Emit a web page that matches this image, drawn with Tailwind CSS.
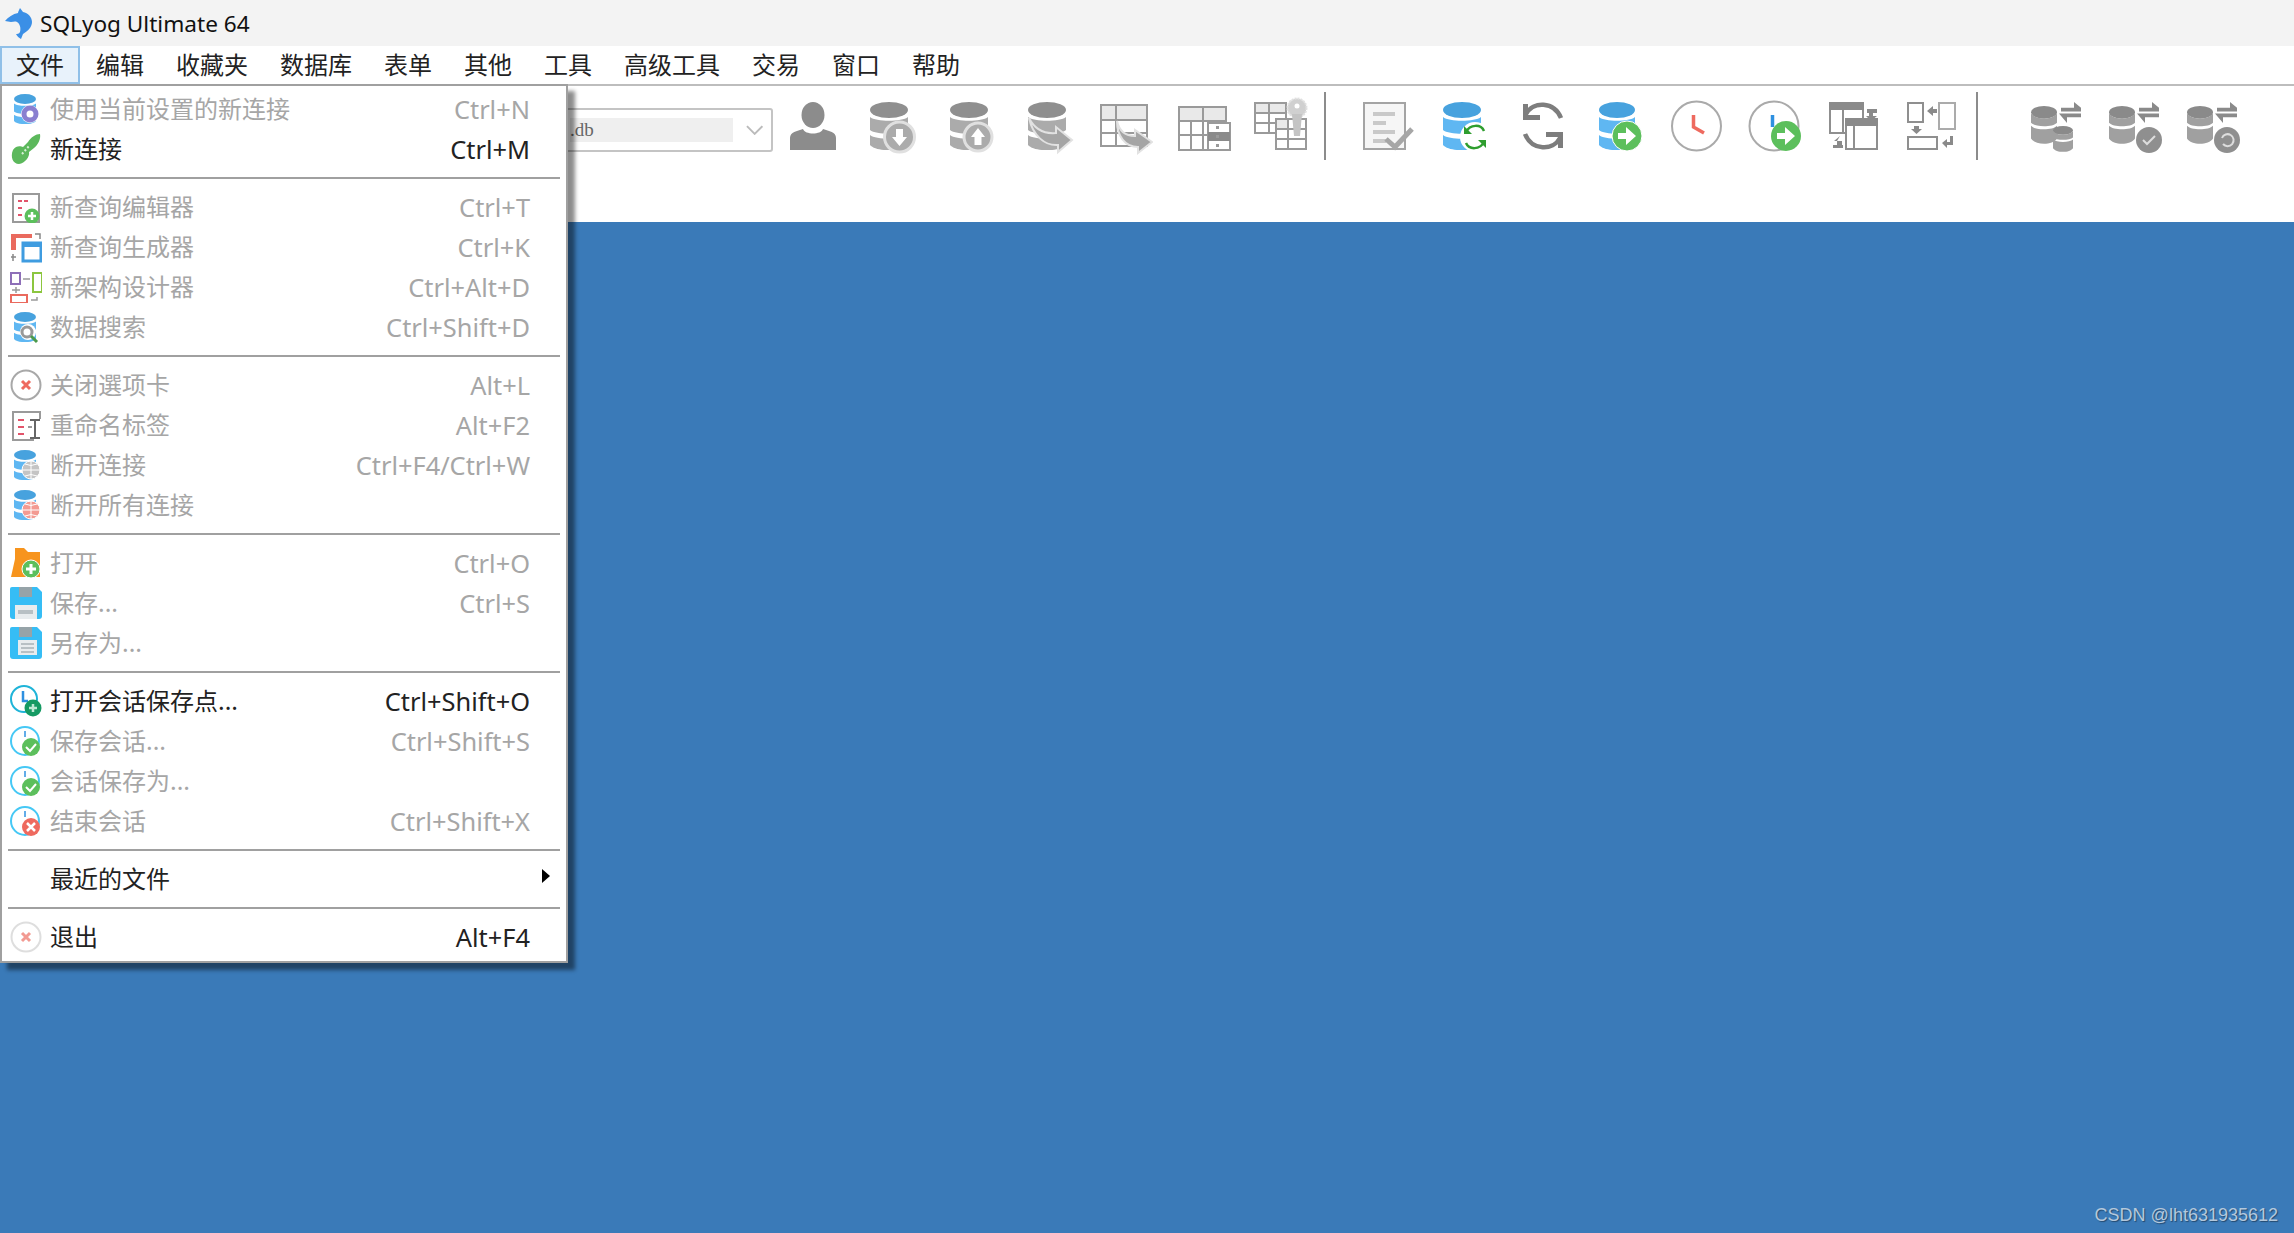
<!DOCTYPE html>
<html lang="zh-CN">
<head>
<meta charset="UTF-8">
<title>SQLyog Ultimate 64</title>
<script src="https://cdn.jsdelivr.net/npm/@tailwindcss/browser@4"></script>
</head>
<body class="font-['Noto_Sans_CJK_SC',sans-serif] bg-[#3a7ab8] overflow-hidden">
<svg class="hidden">
  <symbol id="dbgray" viewBox="0 0 38 48" preserveAspectRatio="none">
    <ellipse cx="19" cy="8" rx="19" ry="8" fill="#8f8f8f"/>
    <path d="M0 15C6 20 32 20 38 15V28C32 33 6 33 0 28Z" fill="#ababab"/>
    <path d="M0 33C6 38 32 38 38 33V43C32 50 6 50 0 43Z" fill="#ababab"/>
  </symbol>
  <symbol id="dbblue" viewBox="0 0 38 48" preserveAspectRatio="none">
    <ellipse cx="19" cy="8" rx="19" ry="8" fill="#47a2de"/>
    <path d="M0 15C6 20 32 20 38 15V28C32 33 6 33 0 28Z" fill="#5fb7f2"/>
    <path d="M0 33C6 38 32 38 38 33V43C32 50 6 50 0 43Z" fill="#5fb7f2"/>
  </symbol>
  <symbol id="dbdark" viewBox="0 0 38 48" preserveAspectRatio="none">
    <ellipse cx="19" cy="8" rx="19" ry="8" fill="#8a8a8a"/>
    <path d="M0 9C6 18 32 18 38 9V21C32 27 6 27 0 21Z" fill="#a0a0a0"/>
    <path d="M0 25C6 31 32 31 38 25V41C32 50 6 50 0 41Z" fill="#a0a0a0"/>
  </symbol>
  <symbol id="floppy" viewBox="0 0 32 32">
    <path d="M2 0H27L32 5V29Q32 32 29 32H3Q0 32 0 29V2Q0 0 2 0Z" fill="#36bdf5"/>
    <rect x="9" y="0" width="13" height="10" fill="#96a3a8"/>
  </symbol>
  <symbol id="xferarrows" viewBox="0 0 24 24" preserveAspectRatio="none">
    <path d="M3 7H16V1L23 7V11H3Z" fill="#8a8a8a"/>
    <path d="M23 13V17H9V23L1 13Z" fill="#8a8a8a"/>
  </symbol>
</svg>

<div class="h-screen flex flex-col relative">
  <!-- title bar -->
  <div class="h-[46px] bg-[#f3f3f3] flex items-center pl-[5px] gap-[8px] pt-[1px]">
    <svg class="w-[27px] h-[31px]" viewBox="0 0 27 31">
      <path d="M15 0C14 2 13 4 13 5C8 6 3 9 0 13C2 13 4 14 6 14C8 14 10 13 12 14C15 16 16 20 15 24C14 26 12 26 11 26C12 28 14 30 16 31L18 26C23 23 27 19 27 14C27 9 23 5 18 4Z" fill="#3b8fe6"/>
    </svg>
    <span class="font-['Noto_Sans'] text-[22.6px] text-[#111]">SQLyog Ultimate 64</span>
  </div>

  <!-- menu bar -->
  <div class="h-[38px] bg-white flex text-[24px] leading-[36px] text-[#222]">
    <span class="px-[16px] ">文件</span>
    <span class="px-[16px]">编辑</span>
    <span class="px-[16px]">收藏夹</span>
    <span class="px-[16px]">数据库</span>
    <span class="px-[16px]">表单</span>
    <span class="px-[16px]">其他</span>
    <span class="px-[16px]">工具</span>
    <span class="px-[16px]">高级工具</span>
    <span class="px-[16px]">交易</span>
    <span class="px-[16px]">窗口</span>
    <span class="px-[16px]">帮助</span>
  </div>

  <!-- toolbar -->
  <div class="h-[138px] bg-white border-t-2 border-[#bdbdbd] flex items-start pl-[440px]">
    <div class="w-[333px] h-[44px] mt-[22px] border-2 border-[#c4c4c4] rounded-[3px] flex items-center pl-[128px] pr-[8px]">
      <div class="w-[169px] h-[24px] bg-[#efefef] font-['Liberation_Serif'] text-[#666] text-[19px] leading-[24px]">.db</div>
      <svg class="ml-[13px] w-[18px] h-[10px]" viewBox="0 0 18 10"><path d="M1 1L9 9L17 1" fill="none" stroke="#bbb" stroke-width="2"/></svg>
    </div>

    <div class="flex ml-[1px]">
      <div class="w-[78px] mt-[10px] flex justify-center">
        <svg class="w-[56px] h-[60px]" viewBox="0 0 56 60" fill="#8c8c8c">
          <ellipse cx="28" cy="19" rx="11.500" ry="13"/>
          <path d="M5 54V42C5 36 12 35 18 33C20 39 36 39 38 33C44 35 51 36 51 42V54Z"/>
        </svg>
      </div>
      <div class="w-[78px] mt-[10px] flex justify-center">
        <svg class="w-[56px] h-[60px]" viewBox="0 0 56 60">
          <use href="#dbgray" x="7" y="6" width="38" height="48"/>
          <circle cx="36.500" cy="41" r="15" fill="#ababab" stroke="#e0e0e0" stroke-width="3"/>
          <path d="M33 33H40V41H44L36.500 50L29 41H33Z" fill="#fff"/>
        </svg>
      </div>
      <div class="w-[78px] mt-[10px] flex justify-center">
        <svg class="w-[56px] h-[60px]" viewBox="0 0 56 60">
          <use href="#dbgray" x="9" y="6" width="38" height="48"/>
          <circle cx="37" cy="41" r="14" fill="#ababab" stroke="#e0e0e0" stroke-width="3"/>
          <path d="M33.500 49H40.500V41H44L37 32L30 41H33.500Z" fill="#fff"/>
        </svg>
      </div>
      <div class="w-[78px] mt-[10px] flex justify-center">
        <svg class="w-[56px] h-[60px]" viewBox="0 0 56 60">
          <use href="#dbgray" x="9" y="6" width="38" height="48"/>
          <path d="M10 22C16 34 26 38 37 37V31L53 44L39 56V49C26 50 14 40 10 22Z" fill="#a5a5a5" stroke="#e2e2e2" stroke-width="2"/>
        </svg>
      </div>
      <div class="w-[78px] mt-[10px] flex justify-center">
        <svg class="w-[56px] h-[60px]" viewBox="0 0 56 60">
          <rect x="4" y="9" width="46" height="41" fill="#fff" stroke="#9a9a9a" stroke-width="2"/>
          <rect x="5" y="10" width="44" height="14" fill="#e9e9e9"/>
          <path d="M4 24H50M4 37H50M19 9V50" stroke="#9a9a9a" stroke-width="2"/>
          <path d="M20 25C22 34 28 40 38 40V34L55 46L41 57V51C28 51 20 40 20 25Z" fill="#a5a5a5" stroke="#e2e2e2" stroke-width="2"/>
        </svg>
      </div>
      <div class="w-[78px] mt-[10px] flex justify-center">
        <svg class="w-[56px] h-[60px]" viewBox="0 0 56 60">
          <rect x="4" y="11" width="47" height="43" fill="#fff" stroke="#9a9a9a" stroke-width="2"/>
          <rect x="5" y="12" width="45" height="13" fill="#e9e9e9"/>
          <path d="M4 25H51M4 39H51M16 25V54M28 11V54" stroke="#9a9a9a" stroke-width="2"/>
          <rect x="33" y="27" width="22" height="27" fill="#fff" stroke="#9a9a9a" stroke-width="2"/>
          <rect x="33" y="36" width="22" height="9" fill="#8a8a8a"/>
          <path d="M41 30h3v3h-3zM41 39h3v3h-3zM41 48h3v3h-3z" fill="#9a9a9a"/>
        </svg>
      </div>
      <div class="w-[78px] mt-[10px] flex justify-center">
        <svg class="w-[56px] h-[60px]" viewBox="0 0 56 60">
          <rect x="2" y="7" width="31" height="30" fill="#fff" stroke="#9a9a9a" stroke-width="2"/>
          <rect x="3" y="8" width="29" height="9" fill="#e9e9e9"/>
          <path d="M2 17H33M2 27H33M16 7V37" stroke="#9a9a9a" stroke-width="2"/>
          <rect x="23" y="23" width="30" height="30" fill="#fff" stroke="#9a9a9a" stroke-width="2"/>
          <rect x="24" y="24" width="11" height="9" fill="#e9e9e9"/>
          <path d="M23 33H53M23 43H53M35 23V53" stroke="#9a9a9a" stroke-width="2"/>
          <circle cx="44" cy="12" r="9.500" fill="#d0d0d0" stroke="#e0e0e0" stroke-width="2" stroke-dasharray="2 1"/>
          <circle cx="44" cy="10" r="2.500" fill="#fff"/>
          <path d="M39 18H49L47 40H41Z" fill="#c4c4c4"/>
        </svg>
      </div>
    </div>

    <div class="w-[2px] h-[68px] mt-[6px] ml-[4px] mr-[23px] bg-[#8c8c8c]"></div>

    <div class="flex">
      <div class="w-[77.6px] mt-[10px] flex justify-center">
        <svg class="w-[56px] h-[60px]" viewBox="0 0 56 60">
          <rect x="4" y="7" width="41" height="46" fill="#f6f6f6" stroke="#a4a4a4" stroke-width="2"/>
          <path d="M13 18H35M13 27H26M13 36H35M13 45H26" stroke="#c9c9c9" stroke-width="4"/>
          <path d="M26 43L35 51L52 33" fill="none" stroke="#a6a6a6" stroke-width="5"/>
        </svg>
      </div>
      <div class="w-[77.6px] mt-[10px] flex justify-center">
        <svg class="w-[56px] h-[60px]" viewBox="0 0 56 60">
          <use href="#dbblue" x="6" y="6" width="38" height="48"/>
          <circle cx="38" cy="41" r="15" fill="#fff"/>
          <path d="M29 36C33 28 44 28 47 35M47 46C43 54 32 54 29 47" fill="none" stroke="#2f9e2f" stroke-width="2.500"/>
          <path d="M27 30V38H35ZM49 52V44H41Z" fill="#2f9e2f"/>
        </svg>
      </div>
      <div class="w-[77.6px] mt-[10px] flex justify-center">
        <svg class="w-[56px] h-[60px]" viewBox="0 0 56 60">
          <path d="M11 18C18 5 39 5 46 22M45 42C38 55 17 55 10 38" fill="none" stroke="#7d7d7d" stroke-width="4.500"/>
          <path d="M8 8V24H25V19H13V8ZM48 52V36H31V41H43V52Z" fill="#7d7d7d"/>
        </svg>
      </div>
      <div class="w-[77.6px] mt-[10px] flex justify-center">
        <svg class="w-[56px] h-[60px]" viewBox="0 0 56 60">
          <use href="#dbblue" x="6" y="6" width="36" height="48"/>
          <circle cx="34" cy="40" r="15" fill="#5cbf5c" stroke="#fff" stroke-width="1"/>
          <path d="M25 37H33V31L43 40L33 49V43H25Z" fill="#fff"/>
        </svg>
      </div>
      <div class="w-[77.6px] mt-[10px] flex justify-center">
        <svg class="w-[56px] h-[60px]" viewBox="0 0 56 60">
          <circle cx="26.500" cy="30" r="24.500" fill="#fff" stroke="#aaa" stroke-width="2"/>
          <path d="M23.500 19V31L34 37" fill="none" stroke="#ee6a5f" stroke-width="3.500"/>
        </svg>
      </div>
      <div class="w-[77.6px] mt-[10px] flex justify-center">
        <svg class="w-[56px] h-[60px]" viewBox="0 0 56 60">
          <circle cx="26" cy="30" r="24.500" fill="#fff" stroke="#aaa" stroke-width="2"/>
          <path d="M24.500 19V31" stroke="#2e90e0" stroke-width="3.500"/>
          <circle cx="38" cy="40" r="15" fill="#5cbf5c"/>
          <path d="M29 37H37V31L47 40L37 49V43H29Z" fill="#fff"/>
        </svg>
      </div>
      <div class="w-[77.6px] mt-[10px] flex justify-center">
        <svg class="w-[56px] h-[60px]" viewBox="0 0 56 60">
          <rect x="5" y="7" width="33" height="30" fill="#fff" stroke="#8f8f8f" stroke-width="2"/>
          <rect x="4" y="6" width="35" height="8" fill="#8a8a8a"/>
          <path d="M18 14V37" stroke="#8f8f8f" stroke-width="2"/>
          <rect x="21" y="23" width="31" height="30" fill="#fff" stroke="#8f8f8f" stroke-width="2"/>
          <rect x="20" y="22" width="33" height="8" fill="#8a8a8a"/>
          <path d="M29 30V53" stroke="#8f8f8f" stroke-width="2"/>
          <path d="M42 13H52V17H48V20H52L46 25L41 20H44V17H42ZM15 40L9 45H12V49H17V45H12ZM8 49H18V52H8Z" fill="#8a8a8a"/>
        </svg>
      </div>
      <div class="w-[77.6px] mt-[10px] flex justify-center">
        <svg class="w-[56px] h-[60px]" viewBox="0 0 56 60">
          <rect x="5" y="7" width="15" height="19" fill="#fff" stroke="#8f8f8f" stroke-width="2"/>
          <rect x="36" y="7" width="16" height="26" fill="#fff" stroke="#ababab" stroke-width="2"/>
          <rect x="5" y="41" width="29" height="12" fill="#fff" stroke="#8f8f8f" stroke-width="2"/>
          <path d="M24 15L30 10V13H34V17H30V20ZM11 30H16V33H19L13.500 38L8 33H11ZM39 47L44 43V46H47V40H50V49H44V52Z" fill="#8a8a8a"/>
        </svg>
      </div>
    </div>

    <div class="w-[2px] h-[68px] mt-[6px] ml-[6px] mr-[39px] bg-[#8c8c8c]"></div>

    <div class="flex">
      <div class="w-[78px] mt-[10px] flex justify-center">
        <svg class="w-[56px] h-[60px]" viewBox="0 0 56 60">
          <use href="#dbdark" x="3" y="10" width="26" height="38"/>
          <use href="#dbdark" x="25" y="30" width="20" height="26"/>
          <use href="#xferarrows" x="30" y="5" width="24" height="23"/>
        </svg>
      </div>
      <div class="w-[78px] mt-[10px] flex justify-center">
        <svg class="w-[56px] h-[60px]" viewBox="0 0 56 60">
          <use href="#dbdark" x="3" y="10" width="26" height="38"/>
          <use href="#xferarrows" x="30" y="5" width="24" height="23"/>
          <circle cx="43" cy="44" r="13" fill="#8f8f8f"/>
          <path d="M37 44L41 48L49 40" fill="none" stroke="#ddd" stroke-width="2"/>
        </svg>
      </div>
      <div class="w-[78px] mt-[10px] flex justify-center">
        <svg class="w-[56px] h-[60px]" viewBox="0 0 56 60">
          <use href="#dbdark" x="3" y="10" width="26" height="38"/>
          <use href="#xferarrows" x="30" y="5" width="24" height="23"/>
          <circle cx="43" cy="44" r="13" fill="#8f8f8f"/>
          <path d="M38 42A6 6 0 1 1 39 48" fill="none" stroke="#ddd" stroke-width="2"/>
        </svg>
      </div>
    </div>
  </div>

  <!-- workspace -->
  <div class="flex-1 bg-[#3a7ab8] flex items-end justify-end pr-[16px] pb-[4px]">
    <span class="font-['Liberation_Sans'] text-[18px] text-[#b4c8dc] [text-shadow:1px_1px_1px_rgba(0,0,0,0.4)]">CSDN @lht631935612</span>
  </div>

  <!-- active menu item -->
  <div class="absolute left-0 top-[46px] w-[80px] h-[38px] bg-[#e8f2fb] border-2 border-[#90c0e8] text-[24px] leading-[32px] pl-[14px] text-[#222]">文件</div>

  <!-- open menu -->
  <div class="absolute left-0 top-[84px] w-[568px] bg-white border-2 border-[#a0a0a0] pt-[3px] pb-[4px] text-[24px] text-[#a6a6a6] shadow-[7px_7px_4px_rgba(0,0,0,0.45)]">
    <div class="h-[40px] flex items-center pl-[8px] pr-[36px]">
      <svg class="w-[32px] h-[32px] mr-[8px] overflow-visible" viewBox="0 0 32 32">
        <use href="#dbblue" x="4" y="1" width="22" height="30"/>
        <circle cx="20" cy="21" r="9" fill="#fff"/>
        <circle cx="20" cy="21" r="6" fill="none" stroke="#8a7fd0" stroke-width="5"/>
      </svg>
      <span class="flex-1 mb-[2px]">使用当前设置的新连接</span><span class="font-['Noto_Sans'] text-[25.4px]">Ctrl+N</span>
    </div>
    <div class="h-[40px] flex items-center pl-[8px] pr-[36px] text-[#222]">
      <svg class="w-[32px] h-[32px] mr-[8px]" viewBox="0 0 32 32">
        <path d="M3 17C6 12 11 13 13 14L18 9C21 4 26 1 30 1C31 6 28 12 24 15L19 19C20 24 15 30 9 31C3 31 0 24 3 17Z" fill="#5cb85c"/>
        <path d="M12 21L20 12" stroke="#d8f0d8" stroke-width="2" stroke-dasharray="2 2"/>
      </svg>
      <span class="flex-1 mb-[2px]">新连接</span><span class="font-['Noto_Sans'] text-[25.4px]">Ctrl+M</span>
    </div>
    <div class="h-[18px] py-[8px] px-[6px]"><div class="h-[2px] bg-[#a0a0a0]"></div></div>

    <div class="h-[40px] flex items-center pl-[8px] pr-[36px]">
      <svg class="w-[32px] h-[32px] mr-[8px]" viewBox="0 0 32 32">
        <rect x="3" y="3" width="26" height="28" fill="#fff" stroke="#9a9a9a" stroke-width="2"/>
        <path d="M8 10H18M8 17H14M8 24H14" stroke="#e2536a" stroke-width="2" stroke-dasharray="4 2"/>
        <circle cx="22" cy="25" r="7.500" fill="#5cbf5c"/>
        <path d="M18 25H26M22 21V29" stroke="#fff" stroke-width="2.500"/>
      </svg>
      <span class="flex-1 mb-[2px]">新查询编辑器</span><span class="font-['Noto_Sans'] text-[25.4px]">Ctrl+T</span>
    </div>
    <div class="h-[40px] flex items-center pl-[8px] pr-[36px]">
      <svg class="w-[32px] h-[32px] mr-[8px]" viewBox="0 0 32 32">
        <path d="M1 3H22V7H6V19H1Z" fill="#ea6a5e"/>
        <rect x="13" y="12" width="18" height="18" fill="#fff" stroke="#3f9ce0" stroke-width="3"/>
        <rect x="12" y="11" width="20" height="5" fill="#3f9ce0"/>
        <path d="M25 3H30V8M3 30V23M1 26H6" fill="none" stroke="#888" stroke-width="1.500"/>
      </svg>
      <span class="flex-1 mb-[2px]">新查询生成器</span><span class="font-['Noto_Sans'] text-[25.4px]">Ctrl+K</span>
    </div>
    <div class="h-[40px] flex items-center pl-[8px] pr-[36px]">
      <svg class="w-[32px] h-[32px] mr-[8px]" viewBox="0 0 32 32">
        <rect x="1" y="2" width="9" height="11" fill="#fff" stroke="#8e6fb8" stroke-width="2"/>
        <rect x="23" y="2" width="9" height="19" fill="#fff" stroke="#8cc63f" stroke-width="2"/>
        <rect x="1" y="24" width="16" height="8" fill="#fff" stroke="#ea6a5e" stroke-width="2"/>
        <path d="M13 8H20M6 16V22M2 19H10M27 26V29H21" fill="none" stroke="#999" stroke-width="1.500"/>
      </svg>
      <span class="flex-1 mb-[2px]">新架构设计器</span><span class="font-['Noto_Sans'] text-[25.4px]">Ctrl+Alt+D</span>
    </div>
    <div class="h-[40px] flex items-center pl-[8px] pr-[36px]">
      <svg class="w-[32px] h-[32px] mr-[8px] overflow-visible" viewBox="0 0 32 32">
        <use href="#dbblue" x="4" y="1" width="22" height="30"/>
        <circle cx="18" cy="21" r="8" fill="#fff"/>
        <circle cx="17" cy="21" r="5" fill="none" stroke="#999" stroke-width="3"/>
        <path d="M21 25L27 31" stroke="#4c9a4c" stroke-width="3"/>
      </svg>
      <span class="flex-1 mb-[2px]">数据搜索</span><span class="font-['Noto_Sans'] text-[25.4px]">Ctrl+Shift+D</span>
    </div>
    <div class="h-[18px] py-[8px] px-[6px]"><div class="h-[2px] bg-[#a0a0a0]"></div></div>

    <div class="h-[40px] flex items-center pl-[8px] pr-[36px]">
      <svg class="w-[32px] h-[32px] mr-[8px]" viewBox="0 0 32 32">
        <circle cx="16" cy="16" r="14.500" fill="#fff" stroke="#a8a8a8" stroke-width="2"/>
        <path d="M12 12L20 20M20 12L12 20" stroke="#ee6a5f" stroke-width="3"/>
      </svg>
      <span class="flex-1 mb-[2px]">关闭選项卡</span><span class="font-['Noto_Sans'] text-[25.4px]">Alt+L</span>
    </div>
    <div class="h-[40px] flex items-center pl-[8px] pr-[36px]">
      <svg class="w-[32px] h-[32px] mr-[8px]" viewBox="0 0 32 32">
        <path d="M30 10V3H3V31H24" fill="none" stroke="#9a9a9a" stroke-width="2"/>
        <path d="M8 11H14M8 18H14M8 25H14" stroke="#e2536a" stroke-width="2"/>
        <path d="M20 11H30M25 11V29M20 29H30" fill="none" stroke="#666" stroke-width="2"/>
        <path d="M18 18H22" stroke="#999" stroke-width="2"/>
      </svg>
      <span class="flex-1 mb-[2px]">重命名标签</span><span class="font-['Noto_Sans'] text-[25.4px]">Alt+F2</span>
    </div>
    <div class="h-[40px] flex items-center pl-[8px] pr-[36px]">
      <svg class="w-[32px] h-[32px] mr-[8px] overflow-visible" viewBox="0 0 32 32">
        <use href="#dbblue" x="4" y="1" width="22" height="30"/>
        <circle cx="21" cy="21" r="9" fill="#c4c4c4" stroke="#fff"/>
        <path d="M12 21H30M21 12V30M15 15Q21 18 27 15M15 27Q21 24 27 27" fill="none" stroke="#fff" stroke-width="1"/>
      </svg>
      <span class="flex-1 mb-[2px]">断开连接</span><span class="font-['Noto_Sans'] text-[25.4px]">Ctrl+F4/Ctrl+W</span>
    </div>
    <div class="h-[40px] flex items-center pl-[8px] pr-[36px]">
      <svg class="w-[32px] h-[32px] mr-[8px] overflow-visible" viewBox="0 0 32 32">
        <use href="#dbblue" x="4" y="1" width="22" height="30"/>
        <circle cx="21" cy="21" r="9" fill="#f39a92" stroke="#fff"/>
        <path d="M12 21H30M21 12V30M15 15Q21 18 27 15M15 27Q21 24 27 27" fill="none" stroke="#fff" stroke-width="1"/>
      </svg>
      <span class="flex-1 mb-[2px]">断开所有连接</span>
    </div>
    <div class="h-[18px] py-[8px] px-[6px]"><div class="h-[2px] bg-[#a0a0a0]"></div></div>

    <div class="h-[40px] flex items-center pl-[8px] pr-[36px]">
      <svg class="w-[32px] h-[32px] mr-[8px]" viewBox="0 0 32 32">
        <path d="M5 1H14L18 5H30V30H1L5 12Z" fill="#f7941d"/>
        <circle cx="21" cy="22" r="9" fill="#5cbf5c" stroke="#fff" stroke-width="1"/>
        <path d="M16 22H26M21 17V27" stroke="#fff" stroke-width="3"/>
      </svg>
      <span class="flex-1 mb-[2px]">打开</span><span class="font-['Noto_Sans'] text-[25.4px]">Ctrl+O</span>
    </div>
    <div class="h-[40px] flex items-center pl-[8px] pr-[36px]">
      <svg class="w-[32px] h-[32px] mr-[8px]" viewBox="0 0 32 32">
        <use href="#floppy" x="0" y="0" width="32" height="32"/>
        <rect x="5" y="18" width="22" height="14" fill="#e8ecee"/>
        <rect x="8" y="23" width="15" height="4" fill="#b8c0c4"/>
      </svg>
      <span class="flex-1 mb-[2px]">保存...</span><span class="font-['Noto_Sans'] text-[25.4px]">Ctrl+S</span>
    </div>
    <div class="h-[40px] flex items-center pl-[8px] pr-[36px]">
      <svg class="w-[32px] h-[32px] mr-[8px]" viewBox="0 0 32 32">
        <use href="#floppy" x="0" y="0" width="32" height="32"/>
        <rect x="8" y="13" width="19" height="15" fill="#e8ecee"/>
        <path d="M11 17H24M11 21H24M11 25H24" stroke="#b8c0c4" stroke-width="2"/>
      </svg>
      <span class="flex-1 mb-[2px]">另存为...</span>
    </div>
    <div class="h-[18px] py-[8px] px-[6px]"><div class="h-[2px] bg-[#a0a0a0]"></div></div>

    <div class="h-[40px] flex items-center pl-[8px] pr-[36px] text-[#222]">
      <svg class="w-[32px] h-[32px] mr-[8px]" viewBox="0 0 32 32">
        <circle cx="14" cy="14" r="13" fill="#fff" stroke="#1fb4d8" stroke-width="2"/>
        <path d="M13 6V16H18" fill="none" stroke="#2e90e0" stroke-width="2.500"/>
        <circle cx="23" cy="23" r="8.500" fill="#159a63"/>
        <path d="M19 23H27M23 19V27" stroke="#bfe8d4" stroke-width="2.500"/>
      </svg>
      <span class="flex-1 mb-[2px]">打开会话保存点...</span><span class="font-['Noto_Sans'] text-[25.4px]">Ctrl+Shift+O</span>
    </div>
    <div class="h-[40px] flex items-center pl-[8px] pr-[36px]">
      <svg class="w-[32px] h-[32px] mr-[8px]" viewBox="0 0 32 32">
        <circle cx="15" cy="16" r="14" fill="#fff" stroke="#45c8f5" stroke-width="2"/>
        <path d="M15 6V12" stroke="#2e90e0" stroke-width="1.500"/>
        <circle cx="21" cy="22" r="9" fill="#5cbf5c"/>
        <path d="M16 22L20 26L26 19" fill="none" stroke="#fff" stroke-width="2"/>
      </svg>
      <span class="flex-1 mb-[2px]">保存会话...</span><span class="font-['Noto_Sans'] text-[25.4px]">Ctrl+Shift+S</span>
    </div>
    <div class="h-[40px] flex items-center pl-[8px] pr-[36px]">
      <svg class="w-[32px] h-[32px] mr-[8px]" viewBox="0 0 32 32">
        <circle cx="15" cy="16" r="14" fill="#fff" stroke="#45c8f5" stroke-width="2"/>
        <path d="M15 6V12" stroke="#2e90e0" stroke-width="1.500"/>
        <circle cx="21" cy="22" r="9" fill="#5cbf5c"/>
        <path d="M16 22L20 26L26 19" fill="none" stroke="#fff" stroke-width="2"/>
      </svg>
      <span class="flex-1 mb-[2px]">会话保存为...</span>
    </div>
    <div class="h-[40px] flex items-center pl-[8px] pr-[36px]">
      <svg class="w-[32px] h-[32px] mr-[8px]" viewBox="0 0 32 32">
        <circle cx="15" cy="16" r="14" fill="#fff" stroke="#45c8f5" stroke-width="2"/>
        <path d="M15 6V12" stroke="#2e90e0" stroke-width="1.500"/>
        <circle cx="21" cy="22" r="9" fill="#ee6a5f"/>
        <path d="M17 18L25 26M25 18L17 26" stroke="#fff" stroke-width="2.500"/>
      </svg>
      <span class="flex-1 mb-[2px]">结束会话</span><span class="font-['Noto_Sans'] text-[25.4px]">Ctrl+Shift+X</span>
    </div>
    <div class="h-[18px] py-[8px] px-[6px]"><div class="h-[2px] bg-[#a0a0a0]"></div></div>

    <div class="h-[40px] flex items-center pl-[48px] pr-[16px] text-[#222]">
      <span class="flex-1 mb-[2px]">最近的文件</span>
      <svg class="w-[8px] h-[14px] mb-[6px]" viewBox="0 0 8 14"><path d="M0 0L8 7L0 14Z" fill="#000"/></svg>
    </div>
    <div class="h-[18px] py-[8px] px-[6px]"><div class="h-[2px] bg-[#a0a0a0]"></div></div>

    <div class="h-[40px] flex items-center pl-[8px] pr-[36px] text-[#222]">
      <svg class="w-[32px] h-[32px] mr-[8px]" viewBox="0 0 32 32">
        <circle cx="16" cy="16" r="14.500" fill="#fff" stroke="#dedede" stroke-width="2"/>
        <path d="M12 12L20 20M20 12L12 20" stroke="#f29a92" stroke-width="3"/>
      </svg>
      <span class="flex-1 mb-[2px]">退出</span><span class="font-['Noto_Sans'] text-[25.4px]">Alt+F4</span>
    </div>
  </div>
</div>
</body>
</html>
